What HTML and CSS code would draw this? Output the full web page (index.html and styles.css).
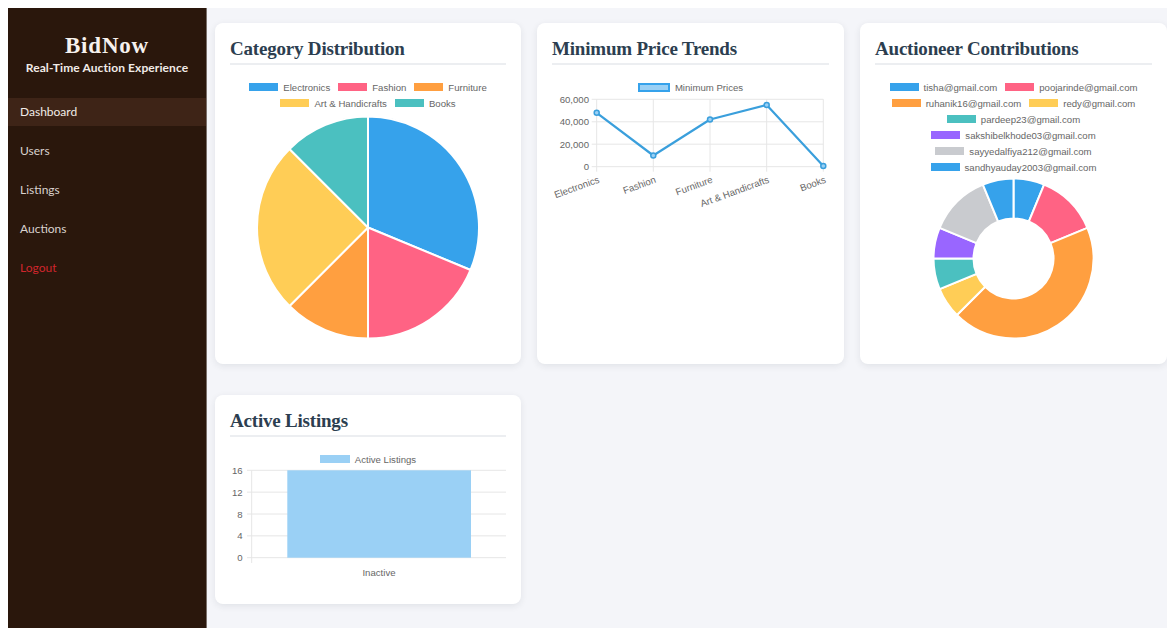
FILE: index.html
```html
<!DOCTYPE html>
<html lang="en">
<head>
<meta charset="utf-8">
<title>BidNow Admin Dashboard</title>
<link rel="stylesheet" href="styles.css">
</head>
<body>
<div class="layout">
  <aside class="sidebar">
    <div class="brand">
      <h1 class="brand-name">BidNow</h1>
      <p class="brand-tag">Real-Time Auction Experience</p>
    </div>
    <nav class="nav">
      <a class="nav-link is-active" href="#">Dashboard</a>
      <a class="nav-link" href="#">Users</a>
      <a class="nav-link" href="#">Listings</a>
      <a class="nav-link" href="#">Auctions</a>
      <a class="nav-link nav-logout" href="#">Logout</a>
    </nav>
  </aside>

  <main class="main">
    <div class="grid">
      <!-- Category pie -->
      <section class="card">
        <h2 class="card-title">Category Distribution</h2>
        <div class="legend">
          <div class="legend-row">
            <span class="legend-item"><i class="swatch c-blue"></i>Electronics</span>
            <span class="legend-item"><i class="swatch c-pink"></i>Fashion</span>
            <span class="legend-item"><i class="swatch c-orange"></i>Furniture</span>
          </div>
          <div class="legend-row">
            <span class="legend-item"><i class="swatch c-yellow"></i>Art &amp; Handicrafts</span>
            <span class="legend-item"><i class="swatch c-teal"></i>Books</span>
          </div>
        </div>
        <svg class="chart pie" width="276" height="230" viewBox="0 0 276 230">
          <g stroke="#fff" stroke-width="2" stroke-linejoin="round">
            <path fill="#36a2eb" d="M138,116.5 L138,5.5 A111,111 0 0 1 240.55,158.98 Z"/>
            <path fill="#ff6384" d="M138,116.5 L240.55,158.98 A111,111 0 0 1 138,227.5 Z"/>
            <path fill="#ff9f40" d="M138,116.5 L138,227.5 A111,111 0 0 1 59.51,194.99 Z"/>
            <path fill="#ffcd56" d="M138,116.5 L59.51,194.99 A111,111 0 0 1 59.51,38.01 Z"/>
            <path fill="#4bc0c0" d="M138,116.5 L59.51,38.01 A111,111 0 0 1 138,5.5 Z"/>
          </g>
        </svg>
      </section>

      <!-- Price line chart -->
      <section class="card">
        <h2 class="card-title">Minimum Price Trends</h2>
        <div class="legend">
          <div class="legend-row">
            <span class="legend-item"><i class="swatch swatch-line"></i>Minimum Prices</span>
          </div>
        </div>
        <svg class="chart" width="277" height="110" viewBox="0 0 277 110">
          <g stroke="#e6e6e6" stroke-width="1">
            <line x1="39.7" y1="4.3" x2="271.3" y2="4.3"/>
            <line x1="39.7" y1="26.8" x2="271.3" y2="26.8"/>
            <line x1="39.7" y1="49.2" x2="271.3" y2="49.2"/>
            <line x1="39.7" y1="71.7" x2="271.3" y2="71.7"/>
            <line x1="44.7" y1="4.3" x2="44.7" y2="76.7"/>
            <line x1="101.3" y1="4.3" x2="101.3" y2="76.7"/>
            <line x1="158" y1="4.3" x2="158" y2="76.7"/>
            <line x1="214.7" y1="4.3" x2="214.7" y2="76.7"/>
            <line x1="271.3" y1="4.3" x2="271.3" y2="76.7"/>
          </g>
          <g class="tick" text-anchor="end" dominant-baseline="central">
            <text x="37" y="4.3">60,000</text>
            <text x="37" y="26.8">40,000</text>
            <text x="37" y="49.2">20,000</text>
            <text x="37" y="71.7">0</text>
          </g>
          <g class="tick" text-anchor="end" dominant-baseline="central">
            <text x="46.7" y="84" transform="rotate(-20 46.7 84)">Electronics</text>
            <text x="103.3" y="84" transform="rotate(-20 103.3 84)">Fashion</text>
            <text x="160" y="84" transform="rotate(-20 160 84)">Furniture</text>
            <text x="216.7" y="84" transform="rotate(-20 216.7 84)">Art &amp; Handicrafts</text>
            <text x="273.3" y="84" transform="rotate(-20 273.3 84)">Books</text>
          </g>
          <polyline fill="none" stroke="#3a9fdc" stroke-width="2.2" stroke-linejoin="round"
            points="44.7,17.8 101.3,60.5 158,24.5 214.7,9.9 271.3,71.1"/>
          <g fill="#9ad0f5" stroke="#3a9fdc" stroke-width="1.5">
            <circle cx="44.7" cy="17.8" r="2.5"/>
            <circle cx="101.3" cy="60.5" r="2.5"/>
            <circle cx="158" cy="24.5" r="2.5"/>
            <circle cx="214.7" cy="9.9" r="2.5"/>
            <circle cx="271.3" cy="71.1" r="2.5"/>
          </g>
        </svg>
      </section>

      <!-- Auctioneer doughnut -->
      <section class="card">
        <h2 class="card-title">Auctioneer Contributions</h2>
        <div class="legend">
          <div class="legend-row">
            <span class="legend-item"><i class="swatch c-blue"></i>tisha@gmail.com</span>
            <span class="legend-item"><i class="swatch c-pink"></i>poojarinde@gmail.com</span>
          </div>
          <div class="legend-row">
            <span class="legend-item"><i class="swatch c-orange"></i>ruhanik16@gmail.com</span>
            <span class="legend-item"><i class="swatch c-yellow"></i>redy@gmail.com</span>
          </div>
          <div class="legend-row">
            <span class="legend-item"><i class="swatch c-teal"></i>pardeep23@gmail.com</span>
          </div>
          <div class="legend-row">
            <span class="legend-item"><i class="swatch c-purple"></i>sakshibelkhode03@gmail.com</span>
          </div>
          <div class="legend-row">
            <span class="legend-item"><i class="swatch c-grey"></i>sayyedalfiya212@gmail.com</span>
          </div>
          <div class="legend-row">
            <span class="legend-item"><i class="swatch c-blue"></i>sandhyauday2003@gmail.com</span>
          </div>
        </div>
        <svg class="chart" width="277" height="170" viewBox="0 0 277 170">
          <g stroke="#fff" stroke-width="2" stroke-linejoin="round">
            <path fill="#36a2eb" d="M138.5,3.5 A80,80 0 0 1 169.11,9.59 L153.81,46.54 A40,40 0 0 0 138.5,43.5 Z"/>
            <path fill="#ff6384" d="M169.11,9.59 A80,80 0 0 1 212.41,52.89 L175.46,68.19 A40,40 0 0 0 153.81,46.54 Z"/>
            <path fill="#ff9f40" d="M212.41,52.89 A80,80 0 0 1 81.93,140.07 L110.22,111.78 A40,40 0 0 0 175.46,68.19 Z"/>
            <path fill="#ffcd56" d="M81.93,140.07 A80,80 0 0 1 64.59,114.11 L101.54,98.81 A40,40 0 0 0 110.22,111.78 Z"/>
            <path fill="#4bc0c0" d="M64.59,114.11 A80,80 0 0 1 58.5,83.5 L98.5,83.5 A40,40 0 0 0 101.54,98.81 Z"/>
            <path fill="#9966ff" d="M58.5,83.5 A80,80 0 0 1 64.59,52.89 L101.54,68.19 A40,40 0 0 0 98.5,83.5 Z"/>
            <path fill="#c9cbcf" d="M64.59,52.89 A80,80 0 0 1 107.89,9.59 L123.19,46.54 A40,40 0 0 0 101.54,68.19 Z"/>
            <path fill="#36a2eb" d="M107.89,9.59 A80,80 0 0 1 138.5,3.5 L138.5,43.5 A40,40 0 0 0 123.19,46.54 Z"/>
          </g>
        </svg>
      </section>

      <!-- Active listings bar chart -->
      <section class="card">
        <h2 class="card-title">Active Listings</h2>
        <div class="legend">
          <div class="legend-row">
            <span class="legend-item"><i class="swatch c-bar"></i>Active Listings</span>
          </div>
        </div>
        <svg class="chart" width="276" height="115" viewBox="0 0 276 115">
          <g stroke="#e6e6e6" stroke-width="1">
            <line x1="17" y1="3.3" x2="276" y2="3.3"/>
            <line x1="17" y1="25.15" x2="276" y2="25.15"/>
            <line x1="17" y1="47" x2="276" y2="47"/>
            <line x1="17" y1="68.85" x2="276" y2="68.85"/>
            <line x1="17" y1="90.7" x2="276" y2="90.7"/>
            <line x1="21.7" y1="3.3" x2="21.7" y2="96"/>
          </g>
          <rect x="57.3" y="3.3" width="183.7" height="87.4" fill="#9ad0f5"/>
          <g class="tick" text-anchor="end" dominant-baseline="central">
            <text x="12.7" y="3.3">16</text>
            <text x="12.7" y="25.15">12</text>
            <text x="12.7" y="47">8</text>
            <text x="12.7" y="68.85">4</text>
            <text x="12.7" y="90.7">0</text>
          </g>
          <text class="tick" x="149" y="105" text-anchor="middle" dominant-baseline="central">Inactive</text>
        </svg>
      </section>
    </div>
  </main>
</div>
</body>
</html>
```

FILE: styles.css
```css
* {
  box-sizing: border-box;
}

html {
  background: #fff;
}

body {
  margin: 8px 8px 0;
  font-family: "Liberation Sans", Arial, sans-serif;
}

.layout {
  display: flex;
  min-height: calc(100vh - 8px);
}

/* ---------- Sidebar ---------- */
.sidebar {
  flex: 0 0 199px;
  width: 199px;
  background: #2a170c;
  border-right: 1px solid #7a706b;
  padding-top: 24px;
}

.brand {
  text-align: center;
}

.brand-name {
  margin: 0;
  font-family: "Liberation Serif", "Times New Roman", serif;
  font-weight: 700;
  font-size: 23px;
  line-height: 28px;
  letter-spacing: 0.8px;
  color: #f6f1ee;
}

.brand-tag {
  margin: 1px 0 0;
  font-family: Lato, "Liberation Sans", sans-serif;
  font-weight: 700;
  font-size: 12px;
  line-height: 14px;
  letter-spacing: 0.1px;
  color: #f1ebe7;
}

.nav {
  display: flex;
  flex-direction: column;
  gap: 11px;
  margin-top: 23px;
}

.nav-link {
  display: block;
  padding: 7px 12px;
  font-family: Lato, "Liberation Sans", sans-serif;
  font-size: 12px;
  line-height: 14px;
  color: #d9d2ce;
  text-decoration: none;
}

.nav-link.is-active {
  background: #3e2417;
  color: #f2ece8;
}

.nav-logout {
  color: #d0262c;
}

/* ---------- Main area ---------- */
.main {
  flex: 1;
  background: #f4f5f9;
  padding: 15px 1px 0 8px;
}

.grid {
  display: grid;
  grid-template-columns: repeat(3, 1fr);
  grid-template-rows: 341px 209px;
  gap: 31px 16px;
}

.card {
  background: #fff;
  border-radius: 8px;
  box-shadow: 0 2px 7px rgba(30, 40, 60, 0.09);
  padding: 15px;
  display: flex;
  flex-direction: column;
}

.card-title {
  margin: 0;
  padding-bottom: 4px;
  border-bottom: 2px solid #eceef1;
  font-family: "Liberation Serif", "Times New Roman", serif;
  font-weight: 700;
  font-size: 19px;
  line-height: 21px;
  letter-spacing: -0.2px;
  color: #2c3e50;
}

/* ---------- Chart legends ---------- */
.legend {
  margin-top: 14px;
  display: flex;
  flex-direction: column;
  align-items: center;
}

.legend-row {
  display: flex;
  justify-content: center;
  align-items: center;
  gap: 8px;
  height: 16px;
}

.legend-item {
  display: inline-flex;
  align-items: center;
  gap: 5px;
  font-size: 9.6px;
  color: #666;
  white-space: nowrap;
}

.swatch {
  display: inline-block;
  width: 29px;
  height: 8px;
}

.c-blue { background: #36a2eb; }
.c-pink { background: #ff6384; }
.c-orange { background: #ff9f40; }
.c-yellow { background: #ffcd56; }
.c-teal { background: #4bc0c0; }
.c-purple { background: #9966ff; }
.c-grey { background: #c9cbcf; }
.c-bar { background: #9ad0f5; width: 30px; }

.swatch-line {
  width: 32px;
  height: 9px;
  background: #9ad0f5;
  border: 2px solid #36a2eb;
}

/* ---------- Chart drawing ---------- */
.chart {
  display: block;
  overflow: visible;
}

.tick {
  font-family: "Liberation Sans", Arial, sans-serif;
  font-size: 9.6px;
  fill: #666;
}
```
